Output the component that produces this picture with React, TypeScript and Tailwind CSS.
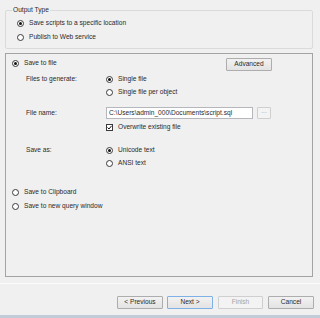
import type { ReactNode } from "react";

type RadioProps = { checked?: boolean; label: string; className?: string };

const Radio = ({ checked = false, label, className = "" }: RadioProps) => (
  <div className={`flex items-center ${className}`}>
    <span className="flex h-[7px] w-[7px] items-center justify-center rounded-full border border-[#3a3a3a] bg-white">
      {checked && <span className="h-[3px] w-[3px] rounded-full bg-[#111]" />}
    </span>
    <span className="ml-[5px]">{label}</span>
  </div>
);

const Check = ({ label, className = "" }: { label: string; className?: string }) => (
  <div className={`flex items-center ${className}`}>
    <span className="flex h-[7px] w-[7px] items-center justify-center border border-[#3a3a3a] bg-white">
      <svg width="5" height="5" viewBox="0 0 5 5">
        <path d="M0.5 2.5 L2 4 L4.6 0.8" fill="none" stroke="#111" strokeWidth="1" />
      </svg>
    </span>
    <span className="ml-[5px]">{label}</span>
  </div>
);

type BtnProps = { children: ReactNode; className?: string; variant?: "normal" | "default" | "disabled" };

const Btn = ({ children, className = "", variant = "normal" }: BtnProps) => {
  const look =
    variant === "default"
      ? "border-[#7fb0e6] bg-gradient-to-b from-[#f2f2f2] to-[#e3e3e3] text-[#2a2a2a]"
      : variant === "disabled"
        ? "border-[#cfcfcf] bg-[#f3f3f3] text-[#a3a3a3]"
        : "border-[#adadad] bg-gradient-to-b from-[#f2f2f2] to-[#e3e3e3] text-[#2a2a2a]";
  return (
    <div className={`flex h-[13px] items-center justify-center rounded-[1px] border ${look} ${className}`}>
      {children}
    </div>
  );
};

export default function App() {
  return (
    <div className="flex h-[318px] w-[320px] flex-col overflow-hidden bg-[#f0f0f0] font-['Liberation_Sans',Arial,sans-serif] text-[6.6px] leading-none text-[#2a2a2a]">
      {/* Output type group */}
      <fieldset className="ml-[5px] mt-[6px] w-[308px] rounded-[2px] border border-[#dadada] pb-[4px] pl-[11px]">
        <legend className="ml-[-5px] h-[8px] px-[1px] leading-[8px]">Output Type</legend>
        <div className="pt-[2px]">
          <Radio checked label="Save scripts to a specific location" className="h-[14px]" />
          <Radio label="Publish to Web service" className="h-[14px]" />
        </div>
      </fieldset>

      {/* Save options */}
      <div className="ml-[5px] mt-[4px] h-[224px] w-[308px] border border-[#a3a3a3] pl-[6px] pt-[2px]">
        <div className="flex items-start justify-between pr-[40px]">
          <Radio checked label="Save to file" className="h-[14px]" />
          <Btn className="mt-[2px] w-[46px]">Advanced</Btn>
        </div>

        <div className="pl-[14px]">
          <div className="mt-[2px] flex">
            <div className="flex h-[13px] w-[80px] items-center">Files to generate:</div>
            <div className="flex flex-col">
              <Radio checked label="Single file" className="h-[13px]" />
              <Radio label="Single file per object" className="h-[13px]" />
            </div>
          </div>

          <div className="mt-[8px] flex h-[12px] items-center">
            <div className="w-[80px]">File name:</div>
            <div className="flex h-[12px] w-[147px] items-center border border-[#b5b7bd] bg-white pl-[2px]">
              C:\Users\admin_000\Documents\script.sql
            </div>
            <div className="ml-[4px] flex h-[12px] w-[14px] items-end justify-center rounded-[1px] border border-[#cfcfcf] bg-[#f3f3f3] pb-[3px] text-[#a8a8a8]">
              ...
            </div>
          </div>

          <Check label="Overwrite existing file" className="ml-[80px] mt-[2px] h-[13px]" />

          <div className="mt-[10px] flex">
            <div className="flex h-[12px] w-[80px] items-center">Save as:</div>
            <div className="flex flex-col">
              <Radio checked label="Unicode text" className="h-[13px]" />
              <Radio label="ANSI text" className="h-[13px]" />
            </div>
          </div>
        </div>

        <div className="mt-[15px]">
          <Radio label="Save to Clipboard" className="h-[14px]" />
          <Radio label="Save to new query window" className="h-[14px]" />
        </div>
      </div>

      {/* Separator */}
      <div className="mt-[6px] h-px bg-[#fbfbfb]" />

      {/* Wizard buttons */}
      <div className="mt-[12px] flex pl-[117px]">
        <Btn className="w-[46px]">&lt; Previous</Btn>
        <Btn variant="default" className="ml-[4px] w-[46px]">Next &gt;</Btn>
        <Btn variant="disabled" className="ml-[5px] w-[45px]">Finish</Btn>
        <Btn className="ml-[5px] w-[46px]">Cancel</Btn>
      </div>

      <div className="flex-1" />
      <div className="h-[3px] bg-[#c2ccd8]" />
    </div>
  );
}
